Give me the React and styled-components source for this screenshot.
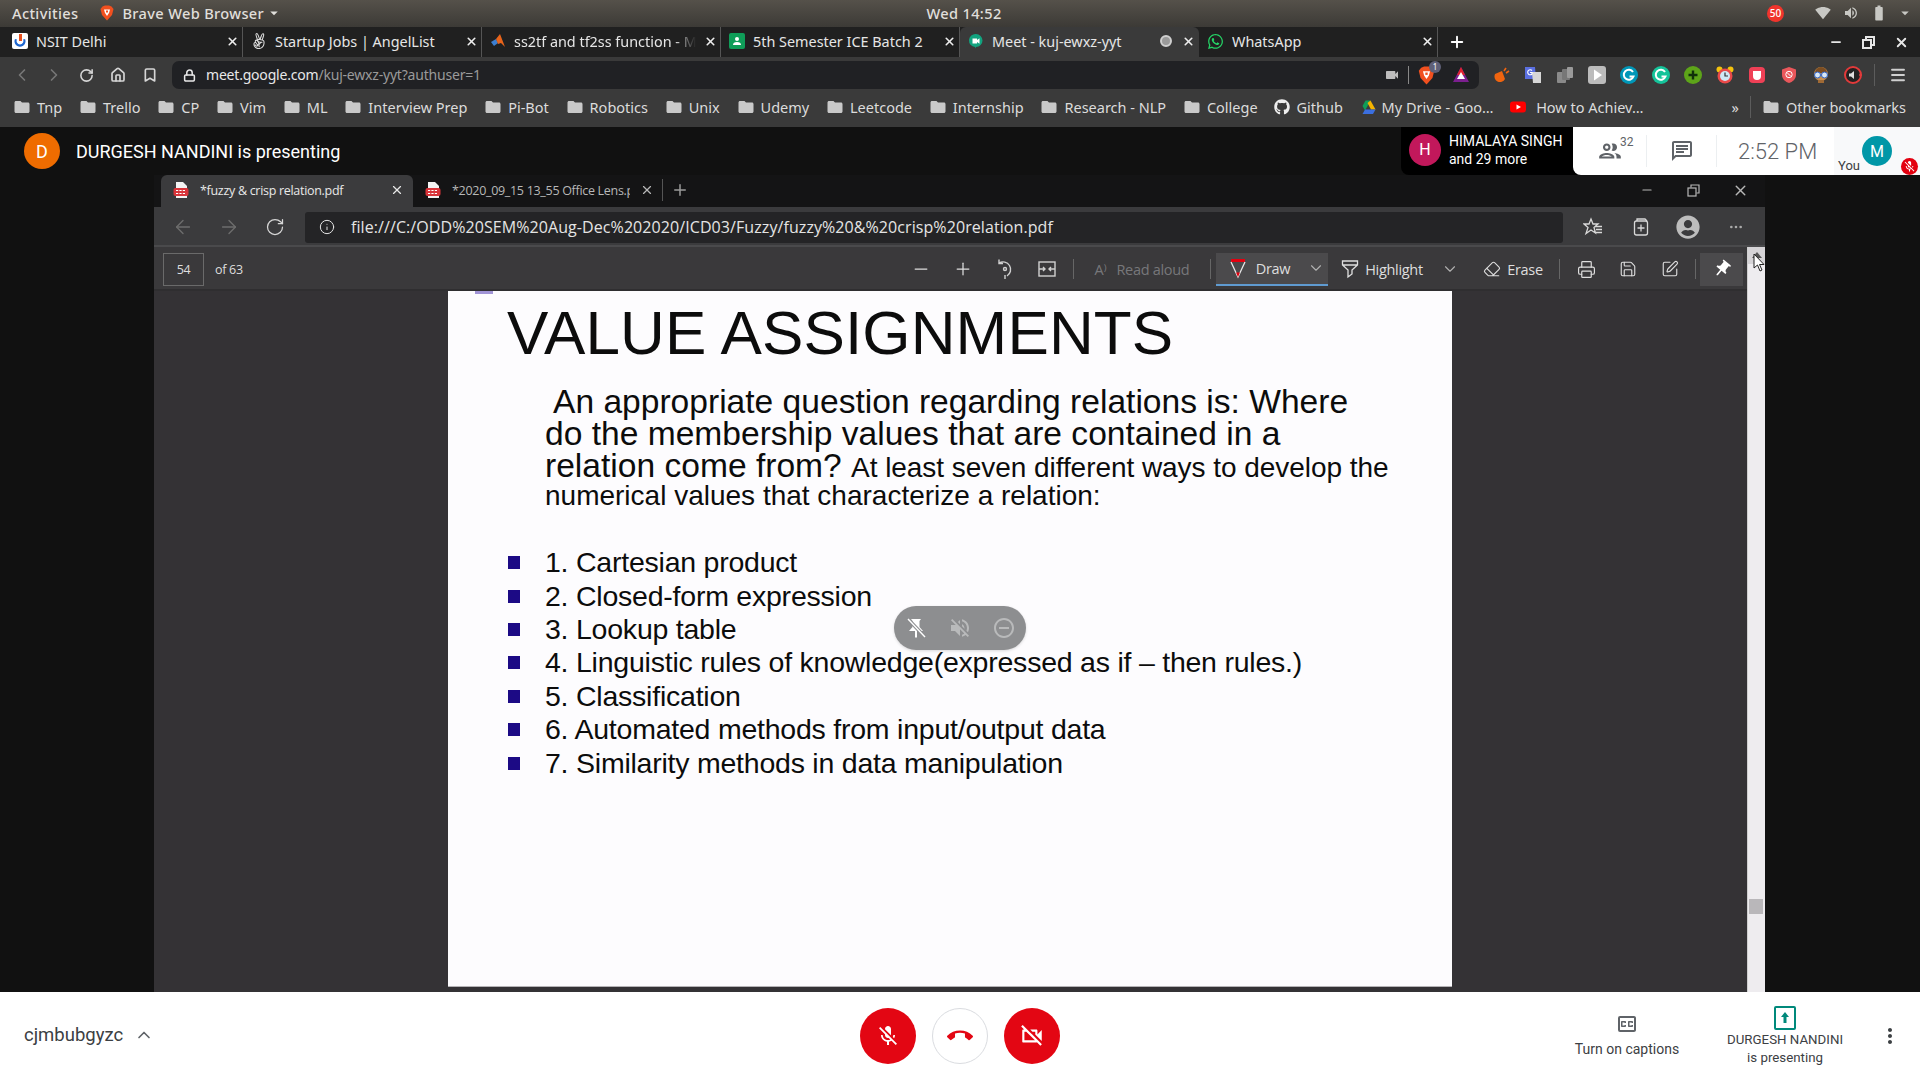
import styled, { createGlobalStyle } from "styled-components";
import {
  ArrowLeft, ArrowRight, ChevronDown, ChevronLeft, ChevronRight, ChevronUp, Eraser, Home, Bookmark, Info, Lock,
  Minus, Plus, Printer, RotateCw, Save, SquarePen, X, Ellipsis, Menu,
} from "lucide-react";
import { FaGithub, FaWhatsapp, FaUserCircle, FaAngellist } from "react-icons/fa";
import {
  MdCallEnd, MdFolder, MdMicOff, MdMoreVert, MdOutlineChat, MdOutlineClosedCaption, MdOutlineGroup, MdPushPin,
  MdVideocam, MdOutlineVideocamOff, MdVolumeOff, MdRemoveCircleOutline, MdSignalWifi4Bar, MdVolumeUp, MdBatteryFull, MdArrowDropDown,
} from "react-icons/md";

const GlobalStyle = createGlobalStyle`
  * { box-sizing: border-box; }
  html, body { margin: 0; padding: 0; background: #111; }
  body { font-family: "Noto Sans", sans-serif; overflow: hidden; }
`;

const BraveIcon = ({ size = 16 }) => (
  <svg width={size} height={size} viewBox="0 0 16 16">
    <path d="M3.5 1.5 L6 .5 H10 L12.5 1.5 L14.5 4 L13 10 L8 15.5 L3 10 L1.5 4 Z" fill="#f1501f" />
    <path d="M5 4.5 H11 L10 8 L8 11 L6 8 Z" fill="#fff" />
    <path d="M7 5.5 H9 V7.5 H7 Z" fill="#f1501f" />
  </svg>
);
const NsitIcon = () => (
  <svg width="16" height="16" viewBox="0 0 16 16">
    <rect width="16" height="16" rx="2" fill="#fff" />
    <path d="M3 6 a5.5 5.5 0 1 0 10 0 l-2 .5 a3.4 3.4 0 1 1 -6 0 Z" fill="#1e66d0" />
    <path d="M7 1 h3 v7 h-3 Z" fill="#e8501f" />
  </svg>
);
const MatlabIcon = () => (
  <svg width="16" height="16" viewBox="0 0 16 16">
    <path d="M1 9 L6 6 L8 10 L4 13 Z" fill="#3d7fd0" />
    <path d="M6 6 L10 1 L15 14 L11 10 L8 11 Z" fill="#e8641b" />
  </svg>
);
const ClassroomIcon = () => (
  <svg width="16" height="16" viewBox="0 0 16 16">
    <rect width="16" height="16" rx="2" fill="#0f9d58" />
    <circle cx="8" cy="6" r="2" fill="#fff" />
    <path d="M4 12 a4 3 0 0 1 8 0 Z" fill="#fff" />
  </svg>
);
const MeetIcon = () => (
  <svg width="16" height="16" viewBox="0 0 16 16">
    <path d="M8 1 a6.5 6.5 0 0 1 0 13 L7 15.5 V14 A6.5 6.5 0 0 1 8 1 Z" fill="#12a37f" />
    <path d="M4.5 5.5 h4.5 v1.4 l2.5 -1.6 v5.4 l-2.5 -1.6 v1.4 h-4.5 Z" fill="#fff" />
  </svg>
);
const DriveIcon = () => (
  <svg width="16" height="16" viewBox="0 0 16 16">
    <path d="M5.5 1.5 h5 L7.9 6.5 L5 11.5 L2.5 7 Z" fill="#0f9d58" />
    <path d="M10.5 1.5 L15.5 10.5 H11 L7.5 4 Z" fill="#f4b400" />
    <path d="M5 10.5 H15.5 L13 15 H2.5 Z" fill="#3b6fe0" />
  </svg>
);
const YoutubeIcon = () => (
  <svg width="16" height="16" viewBox="0 0 16 16">
    <rect y="2.5" width="16" height="11" rx="3" fill="#f00" />
    <path d="M6.5 5.5 L11 8 L6.5 10.5 Z" fill="#fff" />
  </svg>
);
const PdfIcon = () => (
  <svg width="18" height="18" viewBox="0 0 18 18">
    <path d="M4 1 H11 L15 5 V17 H4 Z" fill="#f3f3f3" />
    <rect x="1.5" y="7" width="15" height="8" rx="2" fill="#d9343a" />
    <path d="M4 9.5 H14 M4 12.5 H14" stroke="#fff" strokeWidth="1.2" strokeDasharray="2.2 1.2" />
  </svg>
);
const TriangleExt = () => (
  <svg width="18" height="18" viewBox="0 0 18 18">
    <path d="M9 1 L17 16 H1 Z" fill="#7b1f8f" />
    <path d="M9 1 L13 9 H5 Z" fill="#e0212f" />
    <path d="M9 6 L13 13 H5 Z" fill="#fff" />
  </svg>
);
const BellExt = () => (
  <svg width="18" height="18" viewBox="0 0 18 18">
    <path d="M3 8 L10 5 L13 13 A5 5 0 0 1 3 8 Z" fill="#f0640f" />
    <path d="M12 5 L14 2 M14 7 L17 5" stroke="#f0640f" strokeWidth="1.6" />
  </svg>
);
const TranslateExt = () => (
  <svg width="18" height="18" viewBox="0 0 18 18">
    <path d="M1 1 H11 L12 13 H1 Z" fill="#5a6fe0" />
    <path d="M8 6 H17 V17 H9 Z" fill="#d7d7d7" />
    <path d="M8 4.5 A2.5 2.5 0 1 0 8 8 V6.5 H6" fill="none" stroke="#fff" strokeWidth="1.1" />
  </svg>
);
const StackExt = () => (
  <svg width="18" height="18" viewBox="0 0 18 18">
    <rect x="1" y="6" width="9" height="11" rx="1" fill="#8a8a8a" />
    <rect x="6" y="3" width="8" height="11" rx="1" fill="#777" />
    <rect x="11" y="1" width="6" height="11" rx="1" fill="#9a9a9a" />
  </svg>
);
const PlayExt = () => (
  <svg width="18" height="18" viewBox="0 0 18 18">
    <rect width="18" height="18" rx="3" fill="#bcbcbc" />
    <path d="M6 3.5 L14 9 L6 14.5 Z" fill="#fff" />
  </svg>
);
const RingG = ({ color }) => (
  <svg width="18" height="18" viewBox="0 0 18 18">
    <circle cx="9" cy="9" r="9" fill={color} />
    <path d="M13 6 A5 5 0 1 0 13.5 10.5 H9.5" fill="none" stroke="#fff" strokeWidth="2" />
  </svg>
);
const PlusExt = () => (
  <svg width="18" height="18" viewBox="0 0 18 18">
    <circle cx="9" cy="9" r="9" fill="#5da419" />
    <path d="M9 4.5 V13.5 M4.5 9 H13.5" stroke="#11300a" strokeWidth="2.4" />
  </svg>
);
const ClockExt = () => (
  <svg width="18" height="18" viewBox="0 0 18 18">
    <circle cx="3.5" cy="3.5" r="3" fill="#f4c20d" />
    <circle cx="14.5" cy="3.5" r="3" fill="#f4c20d" />
    <circle cx="9" cy="10" r="7.5" fill="#ea4a4a" />
    <circle cx="9" cy="10" r="5" fill="#cfe9f7" />
    <path d="M9 6.5 V10 H12" stroke="#333" strokeWidth="1.2" fill="none" />
  </svg>
);
const PocketExt = () => (
  <svg width="18" height="18" viewBox="0 0 18 18">
    <rect x="1" y="1" width="16" height="16" rx="4" fill="#ef4056" />
    <path d="M5 5 H13 V10 A4 4 0 0 1 5 10 Z" fill="#fff" />
  </svg>
);
const ShieldExt = () => (
  <svg width="18" height="18" viewBox="0 0 18 18">
    <path d="M9 1 L16 3.5 V9 C16 13 12.5 16 9 17 C5.5 16 2 13 2 9 V3.5 Z" fill="#e9575b" />
    <circle cx="9" cy="8.5" r="3.2" fill="none" stroke="#fff" strokeWidth="1" />
    <path d="M7 6.5 L11 10.5" stroke="#fff" />
  </svg>
);
const GlassesExt = () => (
  <svg width="18" height="18" viewBox="0 0 18 18">
    <circle cx="9" cy="8" r="7" fill="#c8904f" />
    <path d="M3 7 A6 6 0 0 1 15 7 Z" fill="#7b4d22" />
    <circle cx="5.5" cy="9" r="3" fill="#d8e6f5" stroke="#2b62c8" />
    <circle cx="12.5" cy="9" r="3" fill="#d8e6f5" stroke="#2b62c8" />
    <path d="M6 14 H12 V17 H6 Z" fill="#a06a35" />
  </svg>
);
const SpeakerExt = () => (
  <svg width="18" height="18" viewBox="0 0 18 18">
    <circle cx="9" cy="9" r="8" fill="#222" stroke="#e23a3a" strokeWidth="2" />
    <path d="M5 7.5 H7 L10 5 V13 L7 10.5 H5 Z" fill="#ddd" />
    <path d="M15 9 H18" stroke="#e23a3a" strokeWidth="1.5" />
  </svg>
);
const PenIcon = () => (
  <svg width="18" height="22" viewBox="0 0 18 22" fill="none">
    <path d="M2 2 H16 V5 H2 Z" fill="#e3000f" />
    <path d="M2 5 L9 20 L16 5" stroke="#e8e8e8" strokeWidth="1.3" />
    <path d="M7 15.5 L9 20 L11 15.5 Z" fill="#e3000f" />
  </svg>
);
const HighlightIcon = () => (
  <svg width="18" height="22" viewBox="0 0 18 22" fill="none" stroke="#e0e0e0" strokeWidth="1.3">
    <path d="M1.5 3 H16.5 V7 L11 12 V16 L7 19 V12 L1.5 7 Z M1.5 7 H16.5" />
  </svg>
);
const StarList = () => (
  <svg width="20" height="20" viewBox="0 0 20 20" fill="none" stroke="#d8d8d8" strokeWidth="1.3">
    <path d="M8 2 L10 7 H15 L11 10.5 L12.5 16 L8 13 L3 16.5 L5 10.5 L1 7 H6 Z" fill="#3b3b3d" />
    <path d="M12 9.5 H19 M13 12.5 H19 M13 15.5 H19" />
  </svg>
);
const CollectionsIcon = () => (
  <svg width="20" height="20" viewBox="0 0 20 20" fill="none" stroke="#d8d8d8" strokeWidth="1.3">
    <path d="M6 4 V2 H14 L16 4" />
    <rect x="3.5" y="4" width="13" height="14" rx="2" />
    <path d="M10 7.5 V14.5 M6.5 11 H13.5" />
  </svg>
);
const RotateIcon = () => (
  <svg width="20" height="22" viewBox="0 0 20 22" fill="none" stroke="#d0d0d0" strokeWidth="1.4">
    <path d="M4 5 A7.5 7.5 0 1 1 12 18 M4 1.5 V5.5 H8" />
    <circle cx="10" cy="11" r="1.5" />
    <path d="M10 17 V21" />
  </svg>
);
const FitIcon = () => (
  <svg width="18" height="16" viewBox="0 0 18 16" fill="none" stroke="#d0d0d0" strokeWidth="1.4">
    <rect x="1" y="1" width="16" height="14" />
    <path d="M1 8 H7 M5 6 L7 8 L5 10 M17 8 H11 M13 6 L11 8 L13 10" />
  </svg>
);
const RestoreIcon = ({ size = 13, weight = 2 }) => (
  <svg width={size} height={size} viewBox="0 0 13 13" fill="none" stroke="currentColor" strokeWidth={weight}>
    <rect x="1" y="4" width="8" height="8" />
    <path d="M4 3.5 V1 H12 V9 H9.5" />
  </svg>
);
const PinOffIcon = () => (
  <svg width="24" height="24" viewBox="0 0 24 24">
    <path d="M7 3 H17 L15.5 5 V11 L19 15 H13 V21 L12 22 L11 21 V15 H5 L8.5 11 V5 Z" fill="#fff" />
    <path d="M4 3 L21 21" stroke="#8d8e90" strokeWidth="3.4" />
    <path d="M4 3 L21 21" stroke="#fff" strokeWidth="1.4" />
  </svg>
);
const PresentIcon = () => (
  <svg width="22" height="24" viewBox="0 0 22 24" fill="none">
    <rect x="1" y="1" width="20" height="22" rx="1" stroke="#00897b" strokeWidth="2" />
    <path d="M11 6 L15 11 H12.5 V17 H9.5 V11 H7 Z" fill="#00897b" />
  </svg>
);
const CursorIcon = () => (
  <svg width="12" height="20" viewBox="0 0 12 20">
    <path d="M1 1 V15 L4.5 12 L7 18 L9 17 L6.5 11.5 H11 Z" fill="#fff" stroke="#222" />
  </svg>
);

const Page = styled.div`
  width: 1920px;
  height: 1080px;
  display: flex;
  flex-direction: column;
  overflow: hidden;
`;

/* ---- ubuntu top bar ---- */
const SystemBar = styled.header`
  height: 27px;
  flex: none;
  display: grid;
  grid-template-columns: 1fr auto 1fr;
  align-items: center;
  padding: 0 4px 1px 12px;
  background: linear-gradient(#55514a, #3c3a36);
  color: #e0dfdb;
  font-size: 14.6px;
  font-weight: 500;
  letter-spacing: 0.35px;
`;
const SystemLeft = styled.div`
  display: flex;
  align-items: center;
  gap: 21px;
`;
const AppName = styled.div`
  display: flex;
  align-items: center;
  gap: 7px;
`;
const SystemRight = styled.div`
  display: flex;
  align-items: center;
  justify-content: flex-end;
  color: #c8c8c4;
`;
const NotifyBadge = styled.span`
  width: 17px;
  height: 17px;
  margin-right: 25px;
  border-radius: 50%;
  background: #f0342c;
  color: #fff;
  font-size: 10px;
  text-align: center;
  line-height: 17px;
  letter-spacing: 0;
`;
const TraySlot = styled.span`
  width: ${({ $width = 28 }) => $width}px;
  display: flex;
  justify-content: center;
`;

/* ---- chrome tabs ---- */
const TabStrip = styled.div`
  height: 30px;
  flex: none;
  display: flex;
  padding-left: 4px;
  background: #202020;
  color: #e6e6e6;
  font-size: 14.4px;
`;
const Tab = styled.div`
  width: 239px;
  display: flex;
  align-items: center;
  padding: 0 3px 2px 8px;
  gap: 8px;
  background: ${({ $active }) => ($active ? "#3a3a3a" : "transparent")};
  border-right: 1px solid ${({ $active }) => ($active ? "transparent" : "#555")};
  border-radius: ${({ $active }) => ($active ? "6px 6px 0 0" : "0")};
`;
const TabTitle = styled.span`
  flex: 1;
  white-space: nowrap;
  overflow: hidden;
  mask-image: ${({ $fade }) => ($fade ? "linear-gradient(90deg, #000 88%, transparent)" : "none")};
`;
const TabDot = styled.span`
  width: 12px;
  height: 12px;
  margin-right: 2px;
  border-radius: 50%;
  background: #9a9a9a;
  border: 2px solid #cfcfcf;
`;
const NewTab = styled.div`
  width: 38px;
  display: flex;
  align-items: center;
  justify-content: center;
`;
const WindowButtons = styled.div`
  margin-left: auto;
  display: flex;
  align-items: center;
  padding-right: 2px;
`;
const WindowButton = styled.span`
  width: 33px;
  display: flex;
  justify-content: center;
`;

/* ---- chrome toolbar ---- */
const BrowserBar = styled.div`
  height: 36px;
  flex: none;
  display: flex;
  align-items: center;
  padding-left: 6px;
  background: #3a3a3a;
  color: #cfcfcf;
`;
const NavSlot = styled.span`
  width: ${({ $width = 32 }) => $width}px;
  flex: none;
  display: flex;
  justify-content: center;
  align-items: center;
  color: ${({ $color = "#d6d6d6" }) => $color};
`;
const Omnibox = styled.div`
  width: 1307px;
  height: 28px;
  margin: 0 6px;
  flex: none;
  display: flex;
  align-items: center;
  padding-left: 11px;
  background: #202124;
  border-radius: 7px;
  font-size: 14px;
`;
const OmniText = styled.span`
  margin: 0 0 1px 10px;
  color: #e8e8e8;
  letter-spacing: -0.2px;
  span {
    color: #9a9a9a;
  }
`;
const OmniEnd = styled.div`
  margin-left: auto;
  display: flex;
  align-items: center;
  padding-right: 9px;
`;
const ThinDivider = styled.span`
  width: 1px;
  height: ${({ $height = 18 }) => $height}px;
  margin: 0 ${({ $gap = 10 }) => $gap}px;
  background: ${({ $color = "#5c5c5c" }) => $color};
  flex: none;
`;
const ShieldWrap = styled.span`
  position: relative;
  width: 35px;
  display: flex;
`;
const ShieldCount = styled.span`
  position: absolute;
  left: 12px;
  top: -5px;
  width: 12px;
  height: 12px;
  border-radius: 50%;
  background: #5f6078;
  color: #fff;
  font-size: 8px;
  line-height: 12px;
  text-align: center;
`;

/* ---- bookmarks ---- */
const BookmarkBar = styled.nav`
  height: 34px;
  flex: none;
  display: flex;
  align-items: center;
  padding: 0 14px 6px 13px;
  gap: 16.8px;
  background: #3a3a3a;
  color: #dcdcdc;
  font-size: 14.5px;
`;
const BookmarkItem = styled.span`
  display: flex;
  align-items: center;
  gap: 6px;
  white-space: nowrap;
  svg { flex: none; }
`;
const BookmarkEnd = styled.div`
  margin-left: auto;
  display: flex;
  align-items: center;
  gap: 11px;
`;

/* ---- meet stage ---- */
const Stage = styled.main`
  flex: 1;
  min-height: 0;
  display: flex;
  flex-direction: column;
  background: #111;
  font-family: Roboto, sans-serif;
`;
const MeetHeader = styled.div`
  height: 48px;
  flex: none;
  display: flex;
  align-items: center;
  padding-left: 24px;
  color: #fff;
  font-size: 18px;
`;
const Avatar = styled.span`
  width: ${({ $size = 36 }) => $size}px;
  height: ${({ $size = 36 }) => $size}px;
  flex: none;
  display: flex;
  align-items: center;
  justify-content: center;
  border-radius: 50%;
  background: ${({ $bg }) => $bg};
  color: #fff;
  font-size: ${({ $font = 18 }) => $font}px;
`;
const PresenterName = styled.span`
  margin-left: 16px;
`;
const HeaderRight = styled.div`
  margin-left: auto;
  height: 100%;
  display: flex;
`;
const ParticipantChip = styled.div`
  width: 180px;
  display: flex;
  align-items: center;
  padding: 0 0 2px 8px;
  gap: 8px;
  background: #000;
  border-radius: 0 0 0 8px;
  font-size: 14px;
  line-height: 18px;
`;
const InfoPanel = styled.div`
  width: 347px;
  display: flex;
  align-items: center;
  background: #fff;
  color: #5f6368;
  border-radius: 0 0 0 8px;
  margin-left: -8px;
  overflow: hidden;
`;
const PeopleSlot = styled.span`
  width: 73px;
  padding-left: 24px;
  display: flex;
  align-items: flex-start;
  sup {
    margin: -2px 0 0 -3px;
    font-size: 12px;
    line-height: 13px;
  }
`;
const ChatSlot = styled.span`
  width: 71px;
  display: flex;
  justify-content: center;
  border-left: 1px solid #eceff1;
  border-right: 1px solid #eceff1;
  padding: 4px 0;
`;
const Clock = styled.span`
  margin-left: 21px;
  font-size: 22px;
  font-weight: 300;
  white-space: nowrap;
`;
const YouCell = styled.div`
  position: relative;
  margin-left: auto;
  width: 86px;
  height: 100%;
  background: #f8f9fa;
  color: #3c4043;
  font-size: 13px;
`;
const YouAvatar = styled(Avatar)`
  position: absolute;
  left: 28px;
  top: 9px;
`;
const YouLabel = styled.span`
  position: absolute;
  left: 4px;
  top: 31px;
`;
const MuteBadge = styled.span`
  position: absolute;
  right: 2px;
  bottom: 0;
  width: 17px;
  height: 17px;
  display: flex;
  align-items: center;
  justify-content: center;
  border-radius: 50%;
  background: #e3000f;
`;

/* ---- shared edge window ---- */
const SharedWindow = styled.section`
  position: relative;
  flex: 1;
  min-height: 0;
  width: 1611px;
  margin-left: 154px;
  display: flex;
  flex-direction: column;
  font-family: "Open Sans", sans-serif;
  color: #dedede;
`;
const EdgeTabs = styled.div`
  height: 32px;
  flex: none;
  display: flex;
  padding-left: 7px;
  background: #141415;
  font-size: 12.5px;
  letter-spacing: -0.3px;
`;
const EdgeTab = styled.div`
  width: ${({ $width }) => $width}px;
  display: flex;
  align-items: center;
  gap: 10px;
  padding: 0 9px 2px 11px;
  background: ${({ $active }) => ($active ? "#3b3b3d" : "transparent")};
  color: ${({ $active }) => ($active ? "#e8e8e8" : "#b8b8b8")};
  border-radius: 6px 6px 0 0;
  span {
    flex: 1;
    white-space: nowrap;
    overflow: hidden;
  }
`;
const EdgeNewTab = styled.div`
  display: flex;
  align-items: center;
  margin-left: -3px;
  padding: 0 0 2px 2px;
  color: #9a9a9a;
  &::before {
    content: "";
    width: 1px;
    height: 22px;
    margin-right: 8px;
    background: #555;
  }
`;
const EdgeWindowButtons = styled.div`
  margin-left: auto;
  display: flex;
  align-items: center;
  padding: 0 1px 2px 0;
  color: #b8b8b8;
`;
const EdgeWindowButton = styled.span`
  width: 47px;
  display: flex;
  justify-content: center;
`;
const EdgeBar = styled.div`
  height: 40px;
  flex: none;
  display: flex;
  align-items: center;
  padding: 2px 0 0 6px;
  background: #3b3b3d;
  border-bottom: 2px solid #4a4a4c;
`;
const EdgeAddress = styled.div`
  width: 1258px;
  height: 31px;
  margin: 0 6px 0 7px;
  flex: none;
  display: flex;
  align-items: center;
  padding-left: 14px;
  gap: 16px;
  background: #242426;
  border-radius: 3px;
  font-size: 16px;
  letter-spacing: 0.08px;
  color: #e4e4e4;
`;
const PdfBody = styled.div`
  flex: 1;
  min-height: 0;
  display: flex;
`;
const PdfMain = styled.div`
  flex: 1;
  min-width: 0;
  display: flex;
  flex-direction: column;
`;
const PdfToolbar = styled.div`
  height: 44px;
  flex: none;
  display: flex;
  align-items: center;
  padding: 2px 4px 0 9px;
  background: #3a393b;
  border-bottom: 2px solid #2f2e30;
  font-size: 14.5px;
  letter-spacing: -0.3px;
`;
const PageBox = styled.span`
  width: 41px;
  height: 33px;
  display: flex;
  align-items: center;
  justify-content: center;
  border: 1px solid #6a6a6a;
  font-size: 12.5px;
`;
const PageTotal = styled.span`
  margin-left: 11px;
  font-size: 12.5px;
`;
const ToolGroup = styled.div`
  margin-left: auto;
  display: flex;
  align-items: center;
`;
const ToolSlot = styled.span`
  width: ${({ $width = 42 }) => $width}px;
  height: 33px;
  display: flex;
  align-items: center;
  justify-content: center;
  gap: ${({ $gap = 6 }) => $gap}px;
  flex: none;
  padding-left: ${({ $pad = 0 }) => $pad}px;
  color: ${({ $muted }) => ($muted ? "#77777a" : "#dedede")};
  background: ${({ $on }) => ($on ? "#4b4a4c" : "transparent")};
  border-bottom: ${({ $underline }) => ($underline ? "2px solid #5f9bd1" : "none")};
`;
const ToolChevron = styled(ChevronDown)`
  margin-left: ${({ $space = 8 }) => $space}px;
  color: #b0b0b0;
`;
const Viewer = styled.div`
  flex: 1;
  min-height: 0;
  padding: 0 0 5px 294px;
  background: #343235;
`;
const Slide = styled.article`
  position: relative;
  width: 1004px;
  height: 100%;
  padding: 7px 0 0 59px;
  background: #fdfcfe;
  border-bottom: 1px solid #b5b3b6;
  color: #0c0c0c;
  font-family: "Liberation Sans", Arial, sans-serif;
`;
const SlideMark = styled.span`
  position: absolute;
  left: 27px;
  top: 0;
  width: 18px;
  height: 3px;
  background: #a194d6;
`;
const SlideTitle = styled.h1`
  margin: 0;
  font-size: 62px;
  font-weight: 400;
  line-height: 70px;
  letter-spacing: 0.15px;
  white-space: nowrap;
`;
const SlideParagraph = styled.div`
  margin: 17px 0 0 38px;
  white-space: nowrap;
`;
const ParaLine = styled.div`
  height: ${({ $height }) => $height}px;
  line-height: ${({ $height }) => $height}px;
  font-size: ${({ $size = 33.6 }) => $size}px;
  padding-left: ${({ $indent = 0 }) => $indent}px;
  span {
    font-size: 28px;
    letter-spacing: -0.05px;
  }
`;
const SlideList = styled.ul`
  margin: 37px 0 0;
  padding: 0;
  list-style: none;
  font-size: 28.5px;
  letter-spacing: -0.23px;
`;
const SlideItem = styled.li`
  height: 33.4px;
  display: flex;
  align-items: center;
  gap: 25px;
  white-space: nowrap;
  &::before {
    content: "";
    width: 12px;
    height: 13px;
    margin-left: 1px;
    background: #1c0a85;
  }
`;
const FloatingControls = styled.div`
  position: absolute;
  left: 446px;
  top: 315px;
  width: 132px;
  height: 44px;
  display: flex;
  align-items: center;
  justify-content: center;
  gap: 20px;
  border-radius: 22px;
  background: #8d8e90;
  color: #b9babb;
  box-shadow: 0 1px 3px rgba(0, 0, 0, 0.15);
`;
const ScrollColumn = styled.div`
  position: relative;
  width: 18px;
  flex: none;
  background: #eeecef;
  border-left: 1px solid #cfcfcf;
`;
const ScrollTop = styled.div`
  height: 17px;
  background: #d6d4d7;
  display: flex;
  justify-content: center;
  padding-top: 5px;
  &::before {
    content: "";
    border: 5px solid transparent;
    border-top: 0;
    border-bottom: 6px solid #555;
    height: 0;
  }
`;
const ScrollThumb = styled.div`
  position: absolute;
  left: 1px;
  top: 652px;
  width: 14px;
  height: 15px;
  background: #b9b7ba;
`;
const CursorMark = styled.span`
  position: absolute;
  left: 5px;
  top: 6px;
`;

/* ---- bottom bar ---- */
const BottomBar = styled.footer`
  height: 88px;
  flex: none;
  display: grid;
  grid-template-columns: 1fr auto 1fr;
  align-items: center;
  background: #fff;
  font-family: Roboto, sans-serif;
  color: #3c4043;
`;
const MeetingName = styled.div`
  display: flex;
  align-items: center;
  gap: 11px;
  padding: 0 0 2px 24px;
  font-size: 18.5px;
`;
const CallButtons = styled.div`
  display: flex;
  gap: 16px;
`;
const CallButton = styled.button`
  width: 56px;
  height: 56px;
  padding: 0;
  display: flex;
  align-items: center;
  justify-content: center;
  border-radius: 50%;
  border: ${({ $outline }) => ($outline ? "1px solid #dadce0" : "none")};
  background: ${({ $outline }) => ($outline ? "#fff" : "#e30613")};
  color: ${({ $outline }) => ($outline ? "#e30613" : "#fff")};
`;
const BottomRight = styled.div`
  display: flex;
  justify-content: flex-end;
  align-items: center;
  padding-right: 18px;
`;
const BottomAction = styled.div`
  width: 158px;
  display: flex;
  flex-direction: column;
  align-items: center;
  text-align: center;
  font-size: ${({ $font = 13.3 }) => $font}px;
  line-height: 18px;
  margin-top: ${({ $lift = 0 }) => -$lift}px;
`;
const ActionIcon = styled.span`
  height: 26px;
  margin-bottom: ${({ $gap = 3 }) => $gap}px;
  display: flex;
  align-items: center;
`;

const mainTabs = [
  { title: "NSIT Delhi", icon: <NsitIcon /> },
  { title: "Startup Jobs | AngelList", icon: <FaAngellist size={16} color="#ddd" /> },
  { title: "ss2tf and tf2ss function - M", icon: <MatlabIcon />, fade: true },
  { title: "5th Semester ICE Batch 2", icon: <ClassroomIcon /> },
  { title: "Meet - kuj-ewxz-yyt", icon: <MeetIcon />, active: true, recording: true },
  { title: "WhatsApp", icon: <FaWhatsapp size={17} color="#25d366" /> },
];

const bookmarks = [
  "Tnp", "Trello", "CP", "Vim", "ML", "Interview Prep", "Pi-Bot", "Robotics", "Unix", "Udemy", "Leetcode",
  "Internship", "Research - NLP", "College",
];

const extensions = [
  <BellExt key="bell" />, <TranslateExt key="tr" />, <StackExt key="stack" />, <PlayExt key="play" />,
  <RingG key="g1" color="#0097b8" />, <RingG key="g2" color="#15c39a" />, <PlusExt key="plus" />, <ClockExt key="clock" />,
  <PocketExt key="pocket" />, <ShieldExt key="shield" />, <GlassesExt key="glasses" />, <SpeakerExt key="speaker" />,
];

const slideItems = [
  "1. Cartesian product",
  "2. Closed-form expression",
  "3. Lookup table",
  "4. Linguistic rules of knowledge(expressed as if – then rules.)",
  "5. Classification",
  "6. Automated methods from input/output data",
  "7. Similarity methods in data manipulation",
];

export default function App() {
  return (
    <Page>
      <GlobalStyle />
      <SystemBar>
        <SystemLeft>
          Activities
          <AppName>
            <BraveIcon />
            Brave Web Browser
            <MdArrowDropDown size={18} style={{ marginLeft: -6 }} />
          </AppName>
        </SystemLeft>
        <span>Wed 14:52</span>
        <SystemRight>
          <NotifyBadge>50</NotifyBadge>
          <TraySlot><MdSignalWifi4Bar size={16} /></TraySlot>
          <TraySlot><MdVolumeUp size={16} /></TraySlot>
          <TraySlot><MdBatteryFull size={18} /></TraySlot>
          <TraySlot $width={23}><MdArrowDropDown size={18} /></TraySlot>
        </SystemRight>
      </SystemBar>

      <TabStrip>
        {mainTabs.map((tab) => (
          <Tab key={tab.title} $active={tab.active}>
            {tab.icon}
            <TabTitle $fade={tab.fade}>{tab.title}</TabTitle>
            {tab.recording && <TabDot />}
            <X size={13} strokeWidth={3} color="#eee" />
          </Tab>
        ))}
        <NewTab><Plus size={18} strokeWidth={2.5} color="#fff" /></NewTab>
        <WindowButtons>
          <WindowButton><Minus size={14} strokeWidth={3} /></WindowButton>
          <WindowButton><RestoreIcon /></WindowButton>
          <WindowButton><X size={15} strokeWidth={3} /></WindowButton>
        </WindowButtons>
      </TabStrip>

      <BrowserBar>
        <NavSlot $color="#777"><ChevronLeft size={20} /></NavSlot>
        <NavSlot $color="#777"><ChevronRight size={20} /></NavSlot>
        <NavSlot><RotateCw size={15} strokeWidth={2.5} /></NavSlot>
        <NavSlot><Home size={16} strokeWidth={2.5} /></NavSlot>
        <NavSlot><Bookmark size={16} strokeWidth={2.5} /></NavSlot>
        <Omnibox>
          <Lock size={13} strokeWidth={2.8} color="#e8e8e8" />
          <OmniText>meet.google.com<span>/kuj-ewxz-yyt?authuser=1</span></OmniText>
          <OmniEnd>
            <MdVideocam size={16} color="#bdbdbd" />
            <ThinDivider $gap={8} $color="#888" />
            <ShieldWrap>
              <BraveIcon size={19} />
              <ShieldCount>1</ShieldCount>
            </ShieldWrap>
            <TriangleExt />
          </OmniEnd>
        </Omnibox>
        {extensions.map((ext) => <NavSlot key={ext.key}>{ext}</NavSlot>)}
        <ThinDivider $height={22} $gap={5} />
        <NavSlot $width={36}><Menu size={18} strokeWidth={2.5} color="#d0d0d0" /></NavSlot>
      </BrowserBar>

      <BookmarkBar>
        {bookmarks.map((name) => (
          <BookmarkItem key={name}><MdFolder size={18} color="#c9c9c9" />{name}</BookmarkItem>
        ))}
        <BookmarkItem><FaGithub size={16} color="#eee" />Github</BookmarkItem>
        <BookmarkItem><DriveIcon />My Drive - Goo…</BookmarkItem>
        <BookmarkItem><YoutubeIcon />&nbsp;How to Achiev…</BookmarkItem>
        <BookmarkEnd>
          »
          <ThinDivider $height={22} $gap={0} />
          <BookmarkItem><MdFolder size={18} color="#c9c9c9" />Other bookmarks</BookmarkItem>
        </BookmarkEnd>
      </BookmarkBar>

      <Stage>
        <MeetHeader>
          <Avatar $bg="#ef6c00">D</Avatar>
          <PresenterName>DURGESH NANDINI is presenting</PresenterName>
          <HeaderRight>
            <ParticipantChip>
              <Avatar $size={32} $bg="#c2185b" $font={16}>H</Avatar>
              <div>HIMALAYA SINGH<br />and 29 more</div>
            </ParticipantChip>
            <InfoPanel>
              <PeopleSlot><MdOutlineGroup size={26} /><sup>32</sup></PeopleSlot>
              <ChatSlot><MdOutlineChat size={24} /></ChatSlot>
              <Clock>2:52 PM</Clock>
              <YouCell>
                <YouAvatar $size={30} $bg="#0097a7" $font={16}>M</YouAvatar>
                <YouLabel>You</YouLabel>
                <MuteBadge><MdMicOff size={13} color="#fff" /></MuteBadge>
              </YouCell>
            </InfoPanel>
          </HeaderRight>
        </MeetHeader>

        <SharedWindow>
          <EdgeTabs>
            <EdgeTab $active $width={252}>
              <PdfIcon />
              <span>*fuzzy &amp; crisp relation.pdf</span>
              <X size={14} />
            </EdgeTab>
            <EdgeTab $width={250}>
              <PdfIcon />
              <span>*2020_09_15 13_55 Office Lens.p</span>
              <X size={14} />
            </EdgeTab>
            <EdgeNewTab><Plus size={18} /></EdgeNewTab>
            <EdgeWindowButtons>
              <EdgeWindowButton><Minus size={14} /></EdgeWindowButton>
              <EdgeWindowButton><RestoreIcon weight={1.2} /></EdgeWindowButton>
              <EdgeWindowButton><X size={17} /></EdgeWindowButton>
            </EdgeWindowButtons>
          </EdgeTabs>

          <EdgeBar>
            <NavSlot $width={46} $color="#6d6d6d"><ArrowLeft size={22} strokeWidth={1.5} /></NavSlot>
            <NavSlot $width={46} $color="#6d6d6d"><ArrowRight size={22} strokeWidth={1.5} /></NavSlot>
            <NavSlot $width={46}><RotateCw size={20} strokeWidth={1.5} /></NavSlot>
            <EdgeAddress>
              <Info size={16} strokeWidth={1.5} />
              file:///C:/ODD%20SEM%20Aug-Dec%202020/ICD03/Fuzzy/fuzzy%20&amp;%20crisp%20relation.pdf
            </EdgeAddress>
            <NavSlot $width={48}><StarList /></NavSlot>
            <NavSlot $width={47}><CollectionsIcon /></NavSlot>
            <NavSlot $width={48}><FaUserCircle size={24} color="#bdbdbd" /></NavSlot>
            <NavSlot $width={48}><Ellipsis size={16} color="#aaa" /></NavSlot>
          </EdgeBar>

          <PdfBody>
            <PdfMain>
              <PdfToolbar>
                <PageBox>54</PageBox>
                <PageTotal>of 63</PageTotal>
                <ToolGroup>
                  <ToolSlot><Minus size={20} strokeWidth={1.5} /></ToolSlot>
                  <ToolSlot><Plus size={20} strokeWidth={1.5} /></ToolSlot>
                  <ToolSlot><RotateIcon /></ToolSlot>
                  <ToolSlot><FitIcon /></ToolSlot>
                  <ThinDivider $height={20} $gap={5} $color="#666" />
                  <ToolSlot $muted $width={126} $gap={10}>A⁾ <span>Read aloud</span></ToolSlot>
                  <ThinDivider $height={20} $gap={5} $color="#666" />
                  <ToolSlot $on $underline $width={112} $gap={9} $pad={10}>
                    <PenIcon />Draw<ToolChevron size={18} strokeWidth={1.5} />
                  </ToolSlot>
                  <ToolSlot $width={144} $gap={6}>
                    <HighlightIcon />Highlight<ToolChevron $space={12} size={18} strokeWidth={1.5} />
                  </ToolSlot>
                  <ToolSlot $width={82} $gap={6}><Eraser size={18} strokeWidth={1.5} />Erase</ToolSlot>
                  <ThinDivider $height={20} $gap={5} $color="#666" />
                  <ToolSlot><Printer size={19} strokeWidth={1.5} /></ToolSlot>
                  <ToolSlot><Save size={18} strokeWidth={1.5} /></ToolSlot>
                  <ToolSlot><SquarePen size={18} strokeWidth={1.5} /></ToolSlot>
                  <ThinDivider $height={20} $gap={4} $color="#666" />
                  <ToolSlot $on $width={43}><MdPushPin size={20} color="#fff" style={{ transform: "rotate(40deg)" }} /></ToolSlot>
                </ToolGroup>
              </PdfToolbar>
              <Viewer>
                <Slide>
                  <SlideMark />
                  <SlideTitle>VALUE ASSIGNMENTS</SlideTitle>
                  <SlideParagraph>
                    <ParaLine $height={33} $indent={8}>An appropriate question regarding relations is: Where</ParaLine>
                    <ParaLine $height={32}>do the membership values that are contained in a</ParaLine>
                    <ParaLine $height={32}>relation come from? <span>At least seven different ways to develop the</span></ParaLine>
                    <ParaLine $height={27} $size={28}>numerical values that characterize a relation:</ParaLine>
                  </SlideParagraph>
                  <SlideList>
                    {slideItems.map((item) => <SlideItem key={item}>{item}</SlideItem>)}
                  </SlideList>
                  <FloatingControls>
                    <PinOffIcon />
                    <MdVolumeOff size={24} />
                    <MdRemoveCircleOutline size={24} />
                  </FloatingControls>
                </Slide>
              </Viewer>
            </PdfMain>
            <ScrollColumn>
              <ScrollTop />
              <ScrollThumb />
              <CursorMark><CursorIcon /></CursorMark>
            </ScrollColumn>
          </PdfBody>
        </SharedWindow>
      </Stage>

      <BottomBar>
        <MeetingName>cjmbubgyzc <ChevronUp size={20} color="#5f6368" /></MeetingName>
        <CallButtons>
          <CallButton aria-label="Microphone"><MdMicOff size={24} /></CallButton>
          <CallButton $outline aria-label="Leave"><MdCallEnd size={26} /></CallButton>
          <CallButton aria-label="Camera"><MdOutlineVideocamOff size={26} /></CallButton>
        </CallButtons>
        <BottomRight>
          <BottomAction $font={14} $lift={4}>
            <ActionIcon><MdOutlineClosedCaption size={24} color="#5f6368" /></ActionIcon>
            Turn on captions
          </BottomAction>
          <BottomAction>
            <ActionIcon $gap={0}><PresentIcon /></ActionIcon>
            DURGESH NANDINI<br />is presenting
          </BottomAction>
          <MdMoreVert size={24} color="#3c4043" style={{ marginLeft: 14 }} />
        </BottomRight>
      </BottomBar>
    </Page>
  );
}
